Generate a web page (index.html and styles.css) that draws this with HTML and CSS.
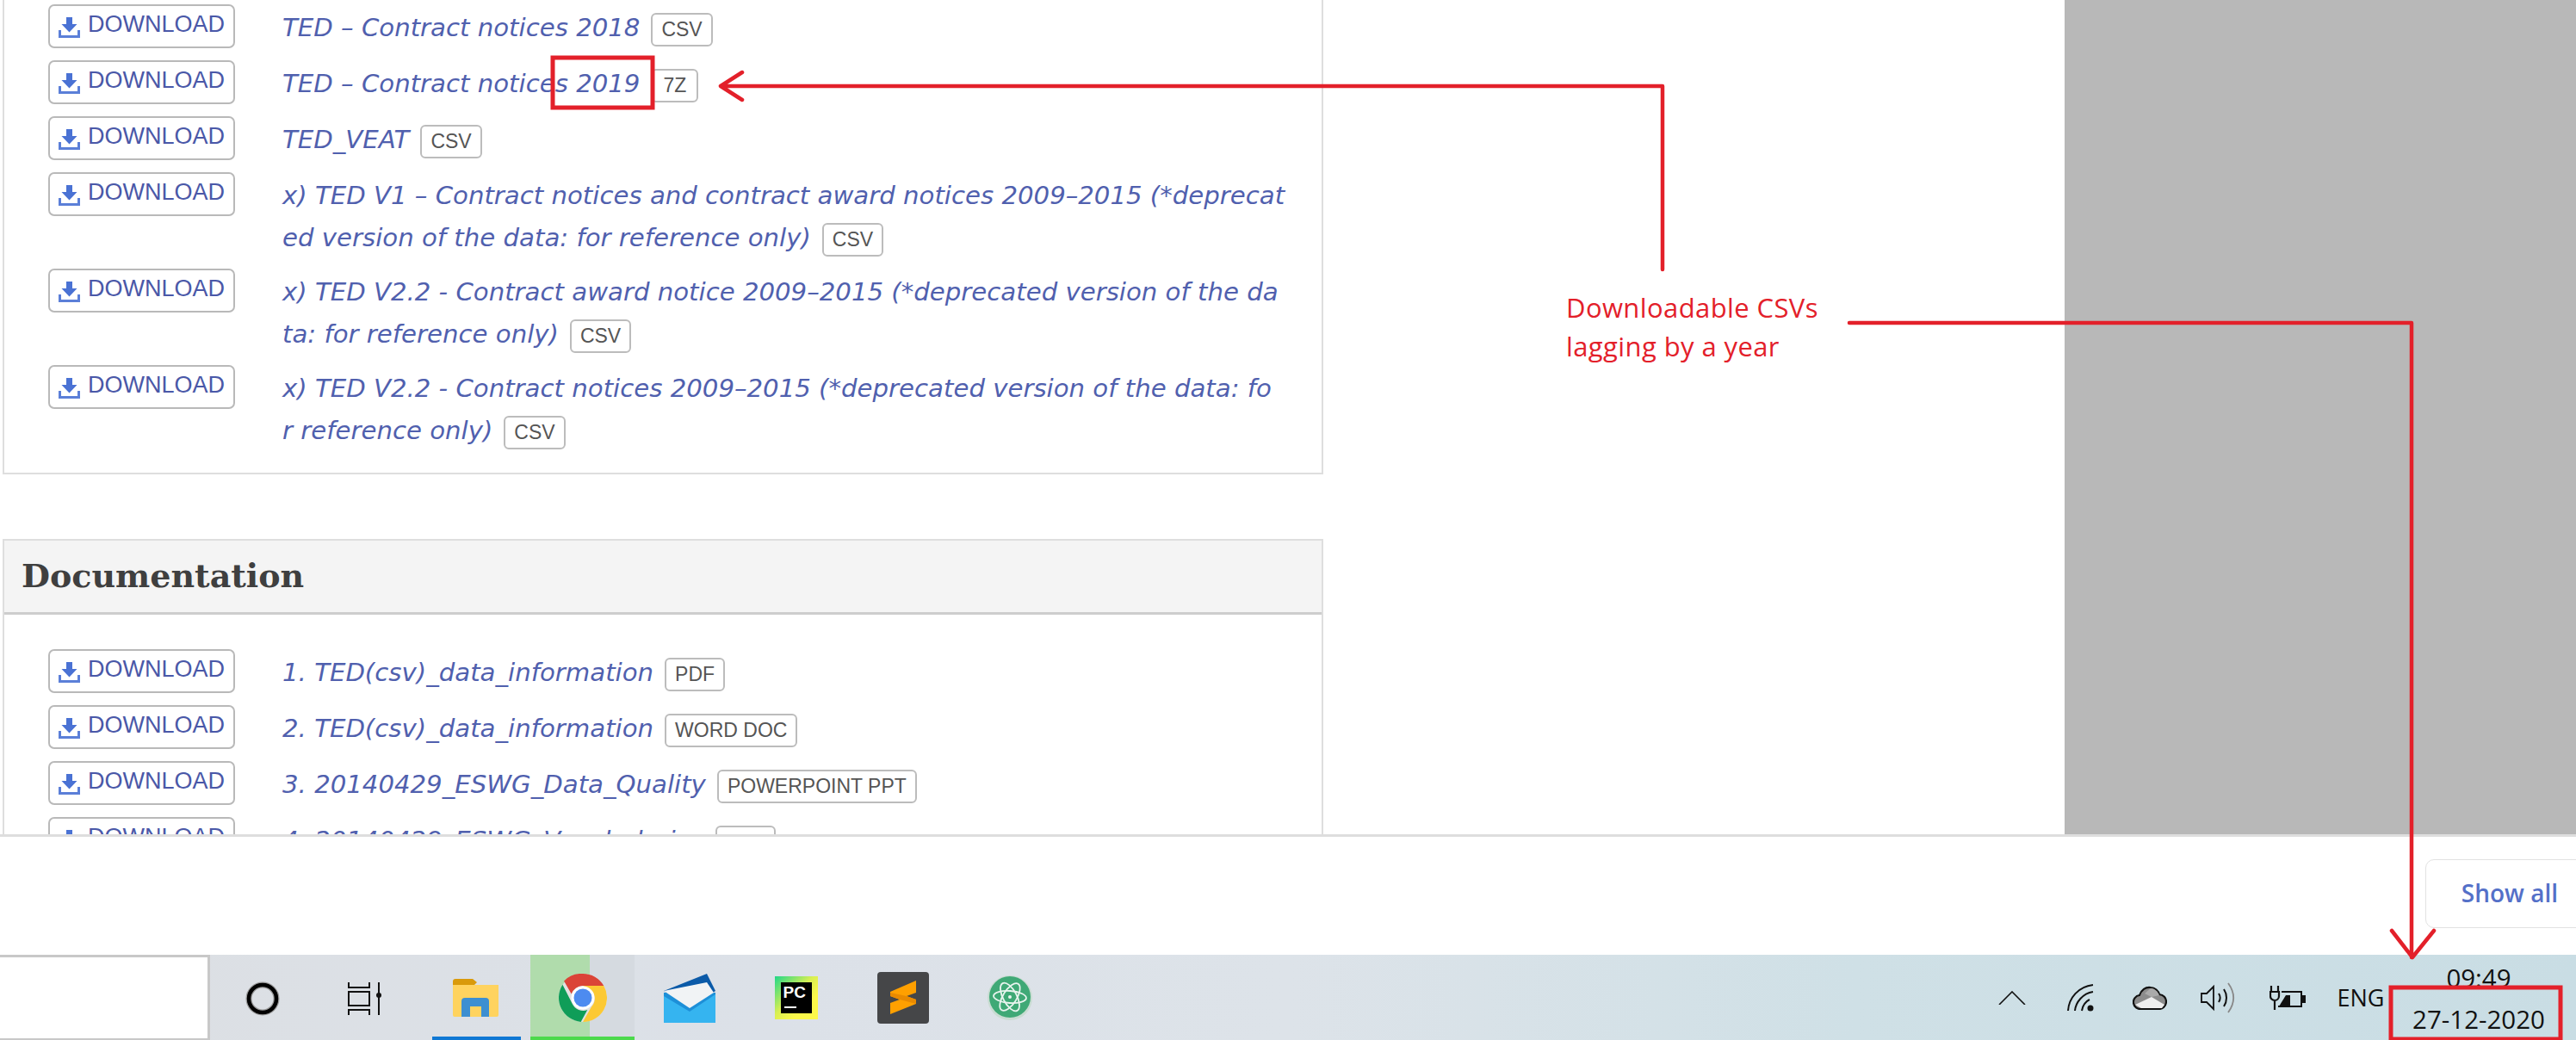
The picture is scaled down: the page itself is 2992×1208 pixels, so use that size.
FILE: index.html
```html
<!DOCTYPE html>
<html lang="en">
<head>
<meta charset="utf-8">
<title>TED downloads</title>
<link rel="stylesheet" href="styles.css">
</head>
<body>
<svg class="defs" width="0" height="0" aria-hidden="true">
  <symbol id="dl" viewBox="0 0 25 24">
    <path d="M9 0h7v8h5.500L12.500 17.500 3.500 8H9z" fill="#4a72d4"/>
    <path d="M0 15h3v6h19v-6h3v9H0z" fill="#5b7fd8"/>
  </symbol>
</svg>
<div class="page">
  <div class="content">
    <main class="column">
      <section class="panel panel-top">
        <div class="row"><a class="btn"><svg class="dl-icon"><use href="#dl"/></svg><span class="btn-label">DOWNLOAD</span></a><p class="item">TED – Contract notices 2018<span class="badge">CSV</span></p></div>
        <div class="row"><a class="btn"><svg class="dl-icon"><use href="#dl"/></svg><span class="btn-label">DOWNLOAD</span></a><p class="item">TED – Contract notices 2019<span class="badge badge-wide">7Z</span></p></div>
        <div class="row"><a class="btn"><svg class="dl-icon"><use href="#dl"/></svg><span class="btn-label">DOWNLOAD</span></a><p class="item">TED_VEAT<span class="badge">CSV</span></p></div>
        <div class="row"><a class="btn"><svg class="dl-icon"><use href="#dl"/></svg><span class="btn-label">DOWNLOAD</span></a><p class="item">x) TED V1 – Contract notices and contract award notices 2009–2015 (*deprecat<br>ed version of the data: for reference only)<span class="badge">CSV</span></p></div>
        <div class="row"><a class="btn"><svg class="dl-icon"><use href="#dl"/></svg><span class="btn-label">DOWNLOAD</span></a><p class="item">x) TED V2.2 - Contract award notice 2009–2015 (*deprecated version of the da<br>ta: for reference only)<span class="badge">CSV</span></p></div>
        <div class="row"><a class="btn"><svg class="dl-icon"><use href="#dl"/></svg><span class="btn-label">DOWNLOAD</span></a><p class="item">x) TED V2.2 - Contract notices 2009–2015 (*deprecated version of the data: fo<br>r reference only)<span class="badge">CSV</span></p></div>
      </section>
      <section class="panel panel-doc">
        <h2 class="panel-title">Documentation</h2>
        <div class="panel-body">
          <div class="row"><a class="btn"><svg class="dl-icon"><use href="#dl"/></svg><span class="btn-label">DOWNLOAD</span></a><p class="item">1. TED(csv)_data_information<span class="badge">PDF</span></p></div>
          <div class="row"><a class="btn"><svg class="dl-icon"><use href="#dl"/></svg><span class="btn-label">DOWNLOAD</span></a><p class="item">2. TED(csv)_data_information<span class="badge">WORD DOC</span></p></div>
          <div class="row"><a class="btn"><svg class="dl-icon"><use href="#dl"/></svg><span class="btn-label">DOWNLOAD</span></a><p class="item">3. 20140429_ESWG_Data_Quality<span class="badge">POWERPOINT PPT</span></p></div>
          <div class="row"><a class="btn"><svg class="dl-icon"><use href="#dl"/></svg><span class="btn-label">DOWNLOAD</span></a><p class="item">4. 20140429_ESWG_Vocabularies<span class="badge">PDF</span></p></div>
        </div>
      </section>
    </main>
    <aside class="gutter"></aside>
  </div>
  <div class="download-bar"><a class="show-all">Show all</a></div>
  <footer class="taskbar">
    <div class="search"></div>
    <div class="cell cell-first">
      <svg width="40" height="40" viewBox="0 0 40 40"><circle cx="20" cy="20" r="16" fill="none" stroke="#9a9a9a" stroke-width="7"/><circle cx="20" cy="20" r="16" fill="none" stroke="#000" stroke-width="4.500"/></svg>
    </div>
    <div class="cell cell-view">
      <svg width="40" height="38" viewBox="0 0 40 38" fill="none" stroke="#111" stroke-width="2"><path d="M1 0v6h24V0M1 11h24v16H1zM1 38v-6h24v6"/><path d="M36 0v38"/><circle cx="36" cy="15" r="3" fill="#111" stroke="none"/></svg>
    </div>
    <div class="apps">
      <div class="app app-blue">
        <svg width="54" height="44" viewBox="0 0 54 44"><path d="M0 3a3 3 0 0 1 3-3h20l5 4-5 5H0z" fill="#d99a0b"/><path d="M0 7h53v35a2 2 0 0 1-2 2H2a2 2 0 0 1-2-2z" fill="#ffd35f"/><path d="M10 44V26a4 4 0 0 1 4-4h24a4 4 0 0 1 4 4v18H33V32H20v12z" fill="#3d8fd1"/></svg>
      </div>
      <div class="app app-active">
        <svg width="56" height="56" viewBox="0 0 48 48"><circle cx="24" cy="24" r="24" fill="#e2e2e2"/><path d="M24 0a24 24 0 0 1 20.800 12H24a12 12 0 0 0-11.400 8.200L5.200 7.200A24 24 0 0 1 24 0z" fill="#db4437"/><path d="M3.800 11 13.500 30a12 12 0 0 0 15 6l-6.500 11.900A24 24 0 0 1 3.800 11z" fill="#0f9d58"/><path d="M24 12h20.800A24 24 0 0 1 24 48l8.500-15A12 12 0 0 0 33 17z" fill="#fcc934"/><circle cx="24" cy="24" r="11.500" fill="#fff"/><circle cx="24" cy="24" r="9" fill="#4d8bf0"/></svg>
      </div>
      <div class="app">
        <svg width="60" height="57" viewBox="0 0 60 57"><path d="M0 20 50 0l10 20-30 20z" fill="#0b5aa8"/><path d="M0 22h60v35H0z" fill="#1d8fd8"/><path d="M0 20 50 10l8 12-28 18z" fill="#f1f3f5"/><path d="M0 26l30 18 30-20v33H0z" fill="#35b4f0"/></svg>
      </div>
      <div class="app">
        <div class="pc-logo"><div class="pc-inner"><span class="pc-text">PC</span><span class="pc-dash"></span></div></div>
      </div>
      <div class="app">
        <svg width="60" height="60" viewBox="0 0 60 60"><rect width="60" height="60" rx="4" fill="#454648"/><path d="M15 23 45 10V24L34 28 45 32V37L15 49V36L26 32 15 28z" fill="#ffa000"/><path d="M15 28 26 32 45 37V32L34 28 15 24z" fill="#e98a00"/></svg>
      </div>
      <div class="app">
        <svg width="52" height="52" viewBox="0 0 52 52"><circle cx="26" cy="26" r="26" fill="#c9dcd2"/><circle cx="26" cy="25" r="24" fill="#3fa976"/><g fill="none" stroke="#e8f4ee" stroke-width="1.800"><ellipse cx="26" cy="25" rx="8" ry="18" transform="rotate(-28 26 25)"/><ellipse cx="26" cy="25" rx="8" ry="18" transform="rotate(32 26 25)"/><ellipse cx="26" cy="25" rx="19" ry="7" transform="rotate(4 26 25)"/></g><circle cx="26" cy="25" r="2" fill="#e8f4ee"/></svg>
      </div>
    </div>
    <div class="tray">
      <div class="tray-cell"><svg width="32" height="16" viewBox="0 0 32 16" fill="none" stroke="#111" stroke-width="1.600"><path d="M1 16 16 1l15 15"/></svg></div>
      <div class="tray-cell"><svg width="32" height="32" viewBox="0 0 32 32" fill="none" stroke="#111" stroke-width="2"><path d="M1 31C2 16 13 3 30 1M9 31C10 21 18 11 30 9M17 31c1-6 5-11 9-13"/><circle cx="27" cy="28" r="3.500" fill="#111" stroke="none"/></svg></div>
      <div class="tray-cell"><svg width="40" height="28" viewBox="0 0 40 28"><path d="M10 27a8 8 0 0 1-2-16C10 5 15 1 21 2c5 0 9 4 10 8a8.500 8.500 0 0 1-1 17z" fill="#8c8c8c" stroke="#111" stroke-width="2.200"/><path d="M3 22 22 13l15 9-3 4H10z" fill="#eee"/><path d="M21 3c4 0 8 3 10 8l-9 2-8-4z" fill="#aaa"/></svg></div>
      <div class="tray-cell"><svg width="42" height="36" viewBox="0 0 42 36" fill="none"><path d="M1 10h6l8-8v26l-8-8H1z" stroke="#111" stroke-width="1.800" transform="translate(0 3)"/><path d="M21 13c2 3 2 7 0 10M27 8c4 6 4 14 0 20" stroke="#111" stroke-width="2"/><path d="M32 1c8 11 8 23 0 34" stroke="#888" stroke-width="1.800"/></svg></div>
      <div class="tray-cell"><svg width="42" height="28" viewBox="0 0 42 28" fill="none" stroke="#111" stroke-width="2"><path d="M2 0v7M10 0v7M1 7h10v5a5 5 0 0 1-10 0zM6 17v11" stroke-width="2.200"/><path d="M14 7h23v17H10"/><path d="M11 24l8-13h5v13z" fill="#111" stroke="none"/><rect x="38" y="11" width="4" height="9" fill="#111" stroke="none"/></svg></div>
      <div class="lang">ENG</div>
      <div class="clock"><span class="clock-line">09:49</span><span class="clock-line">27-12-2020</span></div>
    </div>
  </footer>
  <svg class="marks" width="2992" height="1208" viewBox="0 0 2992 1208" fill="none" stroke="#e3202a" stroke-linecap="round" stroke-linejoin="round" aria-hidden="true">
    <rect x="642" y="67" width="116" height="58" stroke-width="5" stroke-linejoin="miter"/>
    <path d="M1931 313V100H838M862 84 837 100l25 16" stroke-width="4.500"/>
    <path d="M2148 375H2801V1112M2778 1081l24 31 25-31" stroke-width="4.500"/>
    <rect x="2777" y="1147" width="197" height="60" stroke-width="5" stroke-linejoin="miter"/>
  </svg>
  <div class="note">Downloadable CSVs<br>lagging by a year</div>
</div>
</body>
</html>
```

FILE: styles.css
```css
* { box-sizing: border-box; }
html, body { margin: 0; padding: 0; background: #fff; }
.defs { position: absolute; }
.page {
  position: relative;
  width: 2992px;
  height: 1208px;
  display: flex;
  flex-direction: column;
  overflow: hidden;
}
.content {
  height: 969px;
  display: flex;
  overflow: hidden;
}
.column { width: 2398px; padding-left: 3px; }
.gutter { flex: 1; background: #b8b8b8; }
.panel {
  width: 1534px;
  border: 2px solid #dedede;
}
.panel-top {
  border-top: 0;
  height: 551px;
  padding: 5px 0 0 51px;
}
.panel-doc { margin-top: 75px; }
.panel-title {
  margin: 0;
  height: 86px;
  padding: 0 0 2px 20px;
  display: flex;
  align-items: center;
  background: #f4f4f4;
  border-bottom: 3px solid #cdcdcd;
  font: bold 38px "DejaVu Serif", serif;
  color: #3f3f3f;
}
.panel-body { padding: 40px 0 0 51px; }
.row {
  display: flex;
  align-items: flex-start;
  margin-bottom: 14px;
}
.btn {
  flex: none;
  width: 217px;
  height: 51px;
  display: flex;
  align-items: center;
  gap: 9px;
  padding-left: 10px;
  border: 2px solid #b9b9b9;
  border-radius: 7px;
  background: #fff;
}
.dl-icon { width: 25px; height: 24px; flex: none; margin-top: 3px; }
.btn-label {
  font: 27px "Liberation Sans", sans-serif;
  color: #4a58a8;
  margin-top: -4px;
}
.item {
  flex: 1;
  margin: 3px 0 -3px 55px;
  font: italic 29.2px/49px "DejaVu Sans", sans-serif;
  color: #5060ae;
}
.badge {
  display: inline-block;
  height: 39px;
  margin-left: 13px;
  padding: 0 10px;
  border: 2px solid #bcbcbc;
  border-radius: 6px;
  font: normal 23px/35px "Liberation Sans", sans-serif;
  color: #555;
  white-space: nowrap;
}
.badge-wide { padding: 0 12px; }
.download-bar {
  height: 140px;
  border-top: 3px solid #dedede;
  display: flex;
  justify-content: flex-end;
  align-items: center;
  padding-bottom: 5px;
  background: #fff;
}
.show-all {
  flex: none;
  margin-right: -21px;
  padding: 0 41px;
  height: 80px;
  border: 1px solid #e2e2e2;
  border-radius: 10px;
  font: 600 28px/76px "Open Sans", sans-serif;
  color: #5470c8;
}
.taskbar {
  height: 99px;
  display: flex;
  align-items: center;
  background: linear-gradient(90deg, #dcdfe3 0%, #dce1e8 30%, #dde3e9 50%, #cfe0e6 72%, #c9dde4 100%);
}
.search {
  flex: none;
  width: 244px;
  height: 99px;
  background: #fff;
  border: solid #c8c8c8;
  border-width: 3px 3px 2px 0;
}
.cell {
  flex: none;
  display: flex;
  justify-content: center;
  align-items: center;
  padding-top: 2px;
}
.cell-first { width: 121px; }
.cell-view { width: 118px; margin-right: 9px; }
.apps { display: flex; gap: 3px; height: 99px; }
.app {
  position: relative;
  width: 121px;
  height: 99px;
  display: flex;
  justify-content: center;
  align-items: center;
  padding-top: 1px;
}
.app-blue::after, .app-active::after {
  content: "";
  position: absolute;
  left: 10px;
  right: 8px;
  bottom: 0;
  height: 4px;
  background: #0f78d4;
}
.app-active {
  background: linear-gradient(90deg, #b0dcac 57%, #d5dae0 57%);
}
.app-active::after { left: 0; right: 0; background: #4cd94c; }
.pc-logo {
  width: 50px;
  height: 50px;
  padding: 7px;
  background: linear-gradient(135deg, #21d789 0%, #d9ef52 45%, #fcf84a 70%);
}
.pc-inner {
  position: relative;
  width: 36px;
  height: 36px;
  background: #000;
}
.pc-text {
  position: absolute;
  left: 3px;
  top: 1px;
  font: bold 19px/22px "Liberation Sans", sans-serif;
  color: #fff;
}
.pc-dash {
  position: absolute;
  left: 4px;
  bottom: 6px;
  width: 14px;
  height: 2px;
  background: #fff;
}
.tray {
  margin-left: auto;
  display: flex;
  align-items: center;
  height: 99px;
  padding-right: 21px;
}
.tray-cell {
  flex: none;
  width: 80px;
  display: flex;
  justify-content: center;
}
.lang {
  width: 90px;
  text-align: center;
  font: 27px "Open Sans", sans-serif;
  color: #111;
}
.clock {
  width: 184px;
  display: flex;
  flex-direction: column;
  align-items: center;
  padding-top: 3px;
  font: 29.5px/48px "Open Sans", sans-serif;
  color: #111;
}
.clock-line { display: block; }
.marks { position: absolute; left: 0; top: 0; pointer-events: none; }
.note {
  position: absolute;
  left: 1819px;
  top: 335px;
  font: 31px/45px "Open Sans", sans-serif;
  letter-spacing: 0.4px;
  color: #e3202a;
}
```
